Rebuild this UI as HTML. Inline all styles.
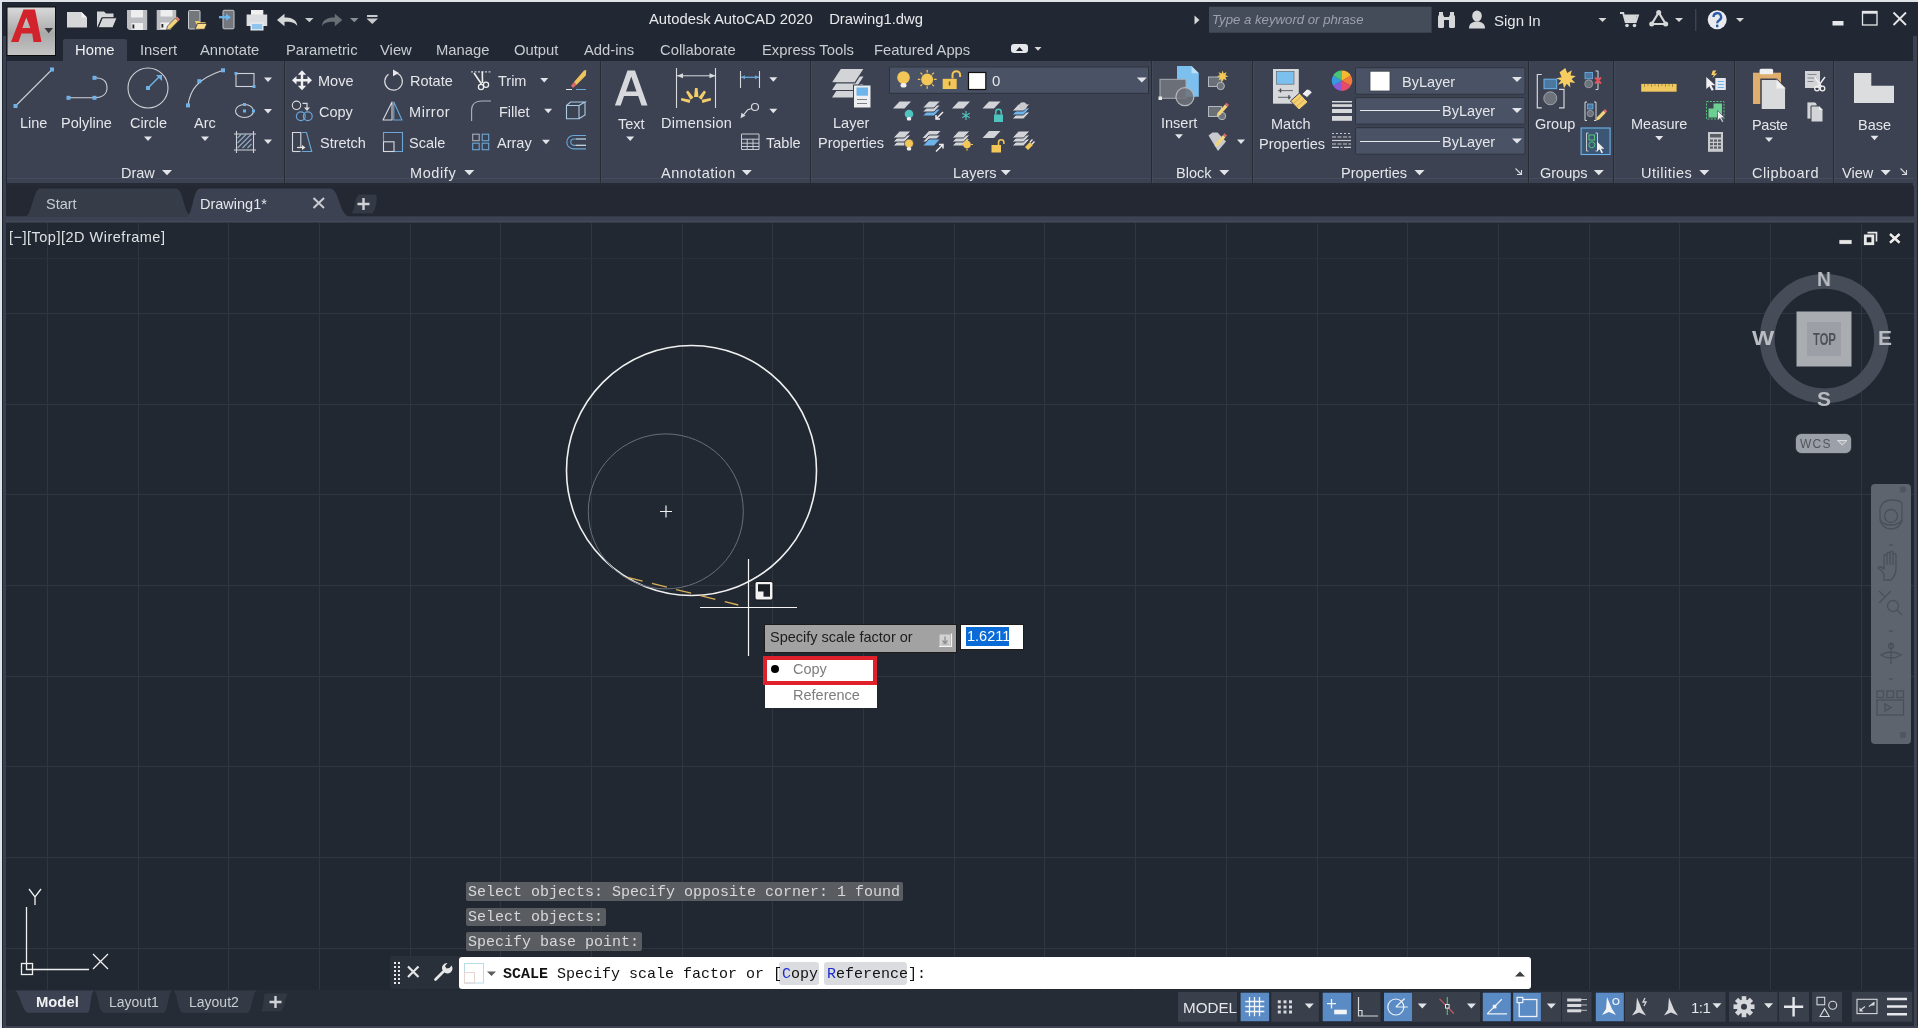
<!DOCTYPE html>
<html><head><meta charset="utf-8">
<style>
*{margin:0;padding:0;box-sizing:border-box}
html,body{width:1918px;height:1028px;overflow:hidden;background:#dfe3e8;font-family:"Liberation Sans",sans-serif}
.a{position:absolute}
.t{position:absolute;white-space:nowrap;line-height:1;font-size:14.5px;color:#e4e6e9;will-change:transform}
.dd{position:absolute;width:0;height:0;border-left:4.5px solid transparent;border-right:4.5px solid transparent;border-top:5px solid #e0e2e6}
svg{position:absolute;overflow:visible}
#frame{left:2px;top:2px;width:1916px;height:1026px;background:#222833}
#ribbon{left:7px;top:61px;width:1906px;height:122px;background:#3d4253}
.sep{position:absolute;top:61px;width:2px;height:122px;background:#262b34;border-right:1px solid #424a58}
#tabbar{left:6px;top:186px;width:1908px;height:36px;background:#232833}
#vp{left:6px;top:222px;width:1908px;height:768px;background:#212832;overflow:hidden}
#laybar{left:6px;top:990px;width:1908px;height:35px;background:#262c36}
.mono{font-family:"Liberation Mono",monospace}
</style></head><body>
<div id="frame" class="a"></div>
<div class="a" style="left:3px;top:36px;width:3px;height:992px;background:#3b4050"></div>
<div class="a" style="left:1914px;top:36px;width:3px;height:992px;background:#3d4350"></div>
<div class="a" style="left:3px;top:1025.5px;width:1915px;height:2.5px;background:#3d4350"></div>
<!-- title bar -->
<svg class="a" style="left:0;top:0" width="1918" height="1028" viewBox="0 0 1918 1028">
<defs>
<linearGradient id="lg" x1="0" y1="0" x2="0" y2="1"><stop offset="0" stop-color="#d9d9d9"/><stop offset="0.55" stop-color="#a9a9a9"/><stop offset="1" stop-color="#c4c4c4"/></linearGradient>
</defs>
<rect x="6.5" y="6.5" width="49.5" height="49.5" fill="#0c0e11"/>
<rect x="7.5" y="7.5" width="47.5" height="47.5" fill="url(#lg)"/>
<path d="M23.5 9.5h11.5l6.5 32.5h-8l-1.3-8.5h-10.7l-3 8.5h-7.5z M26.3 17.5l-4 10.5h8z" fill="#d2232d" fill-rule="evenodd"/>
<path d="M44.5 28h8.5l-4.3 5.3z" fill="#3a3a3a"/>
<!-- new -->
<path d="M67 12h14.5l5.5 5.5V27.5H67z" fill="#d6d7d9"/>
<path d="M81.5 12v5.5h5.5z" fill="#f4f4f4"/>
<!-- open -->
<path d="M97 11.5h7l2 2h7.5v4h-12l-4.5 10.3z" fill="#d6d7d9"/>
<path d="M102.3 17.8h14.8l-4.2 10h-14.8z" fill="#d6d7d9" stroke="#1e232c" stroke-width="1"/>
<!-- save -->
<path d="M127 10h20.2v20H129l-2-2z" fill="#bcbec2"/>
<rect x="131" y="10" width="12" height="7.5" fill="#eeeeee"/>
<rect x="131.5" y="23" width="11.5" height="7" fill="#eeeeee"/>
<rect x="132.5" y="24.5" width="1.8" height="4" fill="#222"/>
<!-- save as -->
<path d="M156.7 10h19.5v12l-6 8h-13.5z" fill="#bcbec2"/>
<rect x="160.5" y="10" width="12" height="6.5" fill="#eeeeee"/>
<rect x="160.5" y="22.5" width="9" height="6.5" fill="#eeeeee"/>
<rect x="161.5" y="24" width="1.8" height="3.5" fill="#222"/>
<path d="M166.5 30l1-4 8-8 3 3-8 8z" fill="#f3d47a" stroke="#1e232c" stroke-width="0.6"/>
<path d="M175.5 18l1.5-1.5 3 3-1.5 1.5z" fill="#e88080"/>
<!-- open from web -->
<rect x="188.5" y="10.5" width="11.5" height="18.5" rx="1" fill="#74777c" stroke="#c8cacd" stroke-width="1"/>
<path d="M195 21h4l1 1.2h5.5v2.5h-9z" fill="#f3cd6a"/>
<path d="M197.5 23.5h9.5l-2.5 5.8h-9.5z" fill="#f7dc8c" stroke="#1e232c" stroke-width="0.7"/>
<!-- save to web -->
<rect x="223" y="10.3" width="11" height="18.5" rx="1" fill="#74777c" stroke="#c8cacd" stroke-width="1"/>
<path d="M219 17.2h8" stroke="#6ab8f0" stroke-width="2.2"/><path d="M226 13.7l5 3.5-5 3.5z" fill="#6ab8f0"/>
<!-- print -->
<rect x="251" y="10" width="12.3" height="6.5" fill="#f0f0f0"/>
<path d="M246.6 14.5h20.6v11.5h-20.6z" fill="#dcdde0"/>
<rect x="250.5" y="22.5" width="13" height="8" fill="#f0f0f0"/>
<rect x="251.8" y="23.8" width="10.5" height="5.5" fill="#8fc4ee"/>
<!-- undo -->
<path d="M277 20l7.5-6.2v3.8c6 0 12.5 1.5 12.8 8.5-2.3-3.8-7-4.5-12.8-4.2v4.3z" fill="#d6d7d9"/>
<path d="M305 18h8.5l-4.2 4.3z" fill="#c8cacd"/>
<!-- redo -->
<path d="M342.3 20l-7.5-6.2v3.8c-6 0-12.5 1.5-12.8 8.5 2.3-3.8 7-4.5 12.8-4.2v4.3z" fill="#6a6f76"/>
<path d="M350 18h8.5l-4.2 4.3z" fill="#8a8f96"/>
<rect x="367" y="15" width="10.5" height="2" fill="#c8cacd"/>
<path d="M366.5 18.5h11.5l-5.75 5.5z" fill="#c8cacd"/>
<!-- search -->
<path d="M1194.5 15.5l5 4.5-5 4.5z" fill="#d6d7d9"/>
<rect x="1209" y="6.7" width="222.6" height="26" fill="#454c59"/>
<!-- binoculars -->
<g fill="#d6d7d9"><rect x="1438" y="15" width="6" height="13" rx="1.5"/><rect x="1449" y="15" width="6" height="13" rx="1.5"/><rect x="1443" y="17" width="7" height="3"/><rect x="1439" y="12" width="4" height="4"/><rect x="1450" y="12" width="4" height="4"/></g>
<!-- person -->
<ellipse cx="1477" cy="16" rx="4.8" ry="5.5" fill="#d6d7d9"/>
<path d="M1469 28.5c0-5 3.5-7 8-7s8 2 8 7z" fill="#d6d7d9"/>
<path d="M1598.5 18h8l-4 4z" fill="#d6d7d9"/>
<!-- cart -->
<path d="M1620 13h3.2l2.5 9h10l2.2-6.5h-13" stroke="#d6d7d9" stroke-width="2" fill="none"/>
<rect x="1625" y="16" width="11" height="5" fill="#d6d7d9"/>
<circle cx="1627" cy="25.5" r="1.8" fill="#d6d7d9"/><circle cx="1634.5" cy="25.5" r="1.8" fill="#d6d7d9"/>
<!-- a360 -->
<path d="M1658.7 12.5l-7 11.5h14z" stroke="#d6d7d9" stroke-width="2.2" fill="none" stroke-linejoin="round"/>
<circle cx="1658.7" cy="12.5" r="2.5" fill="#d6d7d9"/><circle cx="1651.7" cy="24" r="2.5" fill="#d6d7d9"/><circle cx="1665.7" cy="24" r="2.5" fill="#d6d7d9"/>
<path d="M1675 18h8l-4 4z" fill="#d6d7d9"/>
<rect x="1695.3" y="9" width="1" height="22" fill="#4a505a"/>
<!-- help -->
<circle cx="1717.2" cy="19.8" r="9.5" fill="#e8eaee"/>
<path d="M1713.5 17a3.8 3.8 0 1 1 5.5 3.4c-1.3 0.7-1.8 1.3-1.8 2.8" stroke="#2a5aa8" stroke-width="2.3" fill="none"/>
<circle cx="1717.2" cy="26" r="1.4" fill="#2a5aa8"/>
<path d="M1736 18h8l-4 4z" fill="#d6d7d9"/>
<!-- window controls -->
<rect x="1832.5" y="21" width="11" height="4.5" fill="#e6e7ea"/>
<rect x="1862.5" y="11.5" width="14.5" height="13.5" fill="none" stroke="#e6e7ea" stroke-width="1.3"/>
<rect x="1862.5" y="11.5" width="14.5" height="2.2" fill="#e6e7ea"/>
<path d="M1893.5 12.5l12.5 12.5M1906 12.5l-12.5 12.5" stroke="#e6e7ea" stroke-width="1.8"/>
<!-- featured apps toggle -->
<rect x="1011" y="44" width="17" height="9" rx="3" fill="#e6e7ea"/>
<path d="M1016 51h7l-3.5-4z" fill="#1e232c"/>
<path d="M1034.5 47h7l-3.5 3.8z" fill="#d6d7d9"/>
</svg>
<div class="t" style="left:1212px;top:13px;font-size:13.2px;font-style:italic;color:#9ba2ad">Type a keyword or phrase</div>
<div class="t" style="left:1494px;top:13px;font-size:15px;color:#e4e6e9">Sign In</div>

<div class="t" style="left:649px;top:12px;font-size:14.8px;color:#e8e9eb">Autodesk AutoCAD 2020&nbsp;&nbsp;&nbsp; Drawing1.dwg</div>
<!-- ribbon tabs -->
<div class="a" style="left:63px;top:39px;width:64px;height:22px;background:#3d4253;border-radius:2px 2px 0 0"></div>
<div class="t" style="left:74.5px;top:42.5px;font-size:14.8px;color:#f0f1f3">Home</div>
<div class="t" style="left:140px;top:42.5px;color:#c9ccd1;font-size:14.8px">Insert</div>
<div class="t" style="left:200px;top:42.5px;color:#c9ccd1;font-size:14.8px">Annotate</div>
<div class="t" style="left:286px;top:42.5px;color:#c9ccd1;font-size:14.8px">Parametric</div>
<div class="t" style="left:380px;top:42.5px;color:#c9ccd1;font-size:14.8px">View</div>
<div class="t" style="left:436px;top:42.5px;color:#c9ccd1;font-size:14.8px">Manage</div>
<div class="t" style="left:514px;top:42.5px;color:#c9ccd1;font-size:14.8px">Output</div>
<div class="t" style="left:584px;top:42.5px;color:#c9ccd1;font-size:14.8px">Add-ins</div>
<div class="t" style="left:660px;top:42.5px;color:#c9ccd1;font-size:14.8px">Collaborate</div>
<div class="t" style="left:762px;top:42.5px;color:#c9ccd1;font-size:14.8px">Express Tools</div>
<div class="t" style="left:874px;top:42.5px;color:#c9ccd1;font-size:14.8px">Featured Apps</div>

<div id="ribbon" class="a"></div>
<div class="a" style="left:7px;top:178px;width:1906px;height:1px;background:#454c5c"></div>
<div class="a" style="left:7px;top:183px;width:1906px;height:3px;background:#252a34"></div>
<div class="sep" style="left:284px"></div>
<div class="sep" style="left:600px"></div>
<div class="sep" style="left:810px"></div>
<div class="sep" style="left:1151px"></div>
<div class="sep" style="left:1252px"></div>
<div class="sep" style="left:1528px"></div>
<div class="sep" style="left:1613px"></div>
<div class="sep" style="left:1734px"></div>
<div class="sep" style="left:1833px"></div>
<div class="a" style="left:1913px;top:36px;width:4px;height:152px;background:#3c4350"></div>

<svg class="a" style="left:0;top:0" width="1918" height="1028" viewBox="0 0 1918 1028">
<defs>
</defs>
<!-- ===== DRAW ===== -->
<g stroke="#cfd2d6" stroke-width="1.1" fill="none">
<line x1="15.5" y1="106" x2="52" y2="69.5"/>
<path d="M68.5 97.8H94.5M94.5 77.8C103 77.8 107 82 107 87.8C107 93.5 103 97.8 94.5 97.8"/>
<circle cx="148" cy="88" r="20"/>
<path d="M188 105.4C190 90 197 79 223 70.3"/>
<rect x="236" y="73.5" width="18" height="13"/>
<ellipse cx="244.5" cy="111" rx="9" ry="6.5"/>
<path d="M236.5 131v22M253.5 131v22M234 134h22M234 150h22"/>
</g>
<path d="M148 88L159 77" stroke="#6fb1e6" stroke-width="1.5"/>
<path d="M156 75h6v6z" fill="#6fb1e6"/>
<path d="M237.5 148l14-14M237.5 143l9-9M237.5 138l4-4M242.5 148l9-9M247.5 148l4-4" stroke="#8fa9c0" stroke-width="1.2"/>
<g fill="#6fb1e6">
<rect x="13.5" y="104" width="4" height="4"/><rect x="50" y="67.5" width="4" height="4"/>
<rect x="66.5" y="95.8" width="4" height="4"/><rect x="92.5" y="95.8" width="4" height="4"/><rect x="92.5" y="75.8" width="4" height="4"/>
<rect x="146" y="86" width="4" height="4"/>
<rect x="186" y="103.4" width="4" height="4"/><rect x="197.3" y="79.2" width="4" height="4"/><rect x="221" y="68.3" width="4" height="4"/>
<rect x="234.5" y="72" width="3" height="3"/><rect x="252.5" y="85" width="3" height="3"/>
<rect x="243" y="109.5" width="3" height="3"/><rect x="243" y="103" width="3" height="3"/><rect x="252" y="109.5" width="3" height="3"/>
</g>
<g transform="translate(268,79.5)"><path d="M-4 -2h8l-4 4.5z" fill="#e2e4e8"/></g><g transform="translate(268,111)"><path d="M-4 -2h8l-4 4.5z" fill="#e2e4e8"/></g><g transform="translate(268,141.6)"><path d="M-4 -2h8l-4 4.5z" fill="#e2e4e8"/></g>
<g transform="translate(148,138.6)"><path d="M-4 -2h8l-4 4.5z" fill="#e2e4e8"/></g><g transform="translate(205,138.6)"><path d="M-4 -2h8l-4 4.5z" fill="#e2e4e8"/></g><g transform="translate(167,172.6)"><path d="M-5 -2.6h10l-5 5.2z" fill="#e2e4e8"/></g>
<!-- ===== MODIFY ===== -->
<!-- move -->
<path d="M302 70.3l-4.2 4.5h3v4.3h-4.3v-3l-4.5 4.2 4.5 4.2v-3h4.3v4.3h-3l4.2 4.5 4.2-4.5h-3v-4.3h4.3v3l4.5-4.2-4.5-4.2v3h-4.3v-4.3h3z" fill="#f0f0f0"/>
<!-- copy -->
<circle cx="296.5" cy="105.3" r="4.2" stroke="#d8dadd" stroke-width="1.1" fill="none"/>
<path d="M302.5 103.3h4.5v5" stroke="#d8dadd" stroke-width="1.2" fill="none"/>
<path d="M304 107.5h6l-3 3.5z" fill="#d8dadd"/>
<circle cx="300.8" cy="116.3" r="4.4" stroke="#6aa7d8" stroke-width="1.2" fill="none"/>
<circle cx="307.8" cy="116.3" r="4.4" stroke="#6aa7d8" stroke-width="1.2" fill="none"/>
<!-- stretch -->
<path d="M292.5 151.5V132.5h8.3V148" stroke="#d8dadd" stroke-width="1.1" fill="none"/>
<path d="M292.5 151.5h8" stroke="#d8dadd" stroke-width="1.1"/>
<path d="M297 147.5h5" stroke="#e8e8e8" stroke-width="1.2"/><path d="M302 145l3.5 2.5-3.5 2.5z" fill="#e8e8e8"/>
<path d="M302 132.5h4.5l5.2 19h-10" stroke="#6aa7d8" stroke-width="1.1" fill="none"/>
<!-- rotate -->
<path d="M397 73.3A8.8 8.8 0 1 1 388.5 74.2" stroke="#d8dadd" stroke-width="1.2" fill="none"/>
<path d="M393 69.5l6 3.5-6 3.2z" fill="#e8e8e8"/>
<!-- mirror -->
<path d="M392 102v18h-9z" stroke="#d8dadd" stroke-width="1.1" fill="none" stroke-linejoin="round"/>
<path d="M393.8 102v18h8.2z" stroke="#6aa7d8" stroke-width="1.1" fill="none" stroke-linejoin="round"/>
<!-- scale -->
<path d="M383.5 141.5V132.5h19v19h-8.5" stroke="#6aa7d8" stroke-width="1.1" fill="none"/>
<rect x="383.5" y="141.8" width="10.5" height="9.7" stroke="#d8dadd" stroke-width="1.1" fill="none"/>
<!-- trim -->
<path d="M471 71.8h20" stroke="#c0c4ca" stroke-width="1.2" stroke-dasharray="2,1.5"/>
<path d="M474 73l7.5 11M482.3 71.5l0.2 11.5" stroke="#eeeeee" stroke-width="1.6"/>
<circle cx="481" cy="87" r="2.6" stroke="#eeeeee" stroke-width="1.3" fill="none"/>
<circle cx="486" cy="84.7" r="2.6" stroke="#eeeeee" stroke-width="1.3" fill="none"/>
<g transform="translate(544.2,80)"><path d="M-4 -2h8l-4 4.5z" fill="#e2e4e8"/></g>
<!-- erase -->
<path d="M574 82l10-11.5 2.3-0.5-0.5 5.5-9.5 9.5z" fill="#efc45c"/>
<path d="M571 85.5l3-3.5 2.3 3-3.3 3z" fill="#e06a6a"/>
<path d="M566 89.5h6" stroke="#e6e6e6" stroke-width="1"/><path d="M576 89.5h10" stroke="#6aa7d8" stroke-width="1"/>
<!-- fillet -->
<path d="M471.6 121V110C471.6 104 476 101 482 101H491" stroke="#a9b6c4" stroke-width="1.1" fill="none"/>
<g transform="translate(548.2,110.8)"><path d="M-4 -2h8l-4 4.5z" fill="#e2e4e8"/></g>
<!-- explode cube -->
<path d="M566.5 105.5h12.5v13.3h-12.5z M566.5 105.5l4-3.5h14.5l-6 3.5 M585 102v13l-6 3.8" stroke="#a9cbe4" stroke-width="1.1" fill="none"/>
<!-- array -->
<g stroke-width="1.1" fill="none">
<rect x="472.7" y="134.2" width="6.5" height="6.5" stroke="#a9b0b8"/>
<rect x="482.2" y="134.2" width="6.5" height="6.5" stroke="#6aa7d8"/>
<rect x="472.7" y="143.2" width="6.5" height="6.5" stroke="#6aa7d8"/>
<rect x="482.2" y="143.2" width="6.5" height="6.5" stroke="#6aa7d8"/>
</g>
<g transform="translate(546,141.8)"><path d="M-4 -2h8l-4 4.5z" fill="#e2e4e8"/></g>
<!-- offset -->
<path d="M586 135.5h-12.5a6.7 6.7 0 0 0 0 13.4H586 M586 139h-12a3.2 3.2 0 0 0 0 6.4H586" stroke="#6aa7d8" stroke-width="1.1" fill="none"/>
<path d="M576 139h10M576 145.4h10" stroke="#c8ccd2" stroke-width="1.1"/>
<g transform="translate(469.3,172.6)"><path d="M-5 -2.6h10l-5 5.2z" fill="#e2e4e8"/></g>
<!-- ===== ANNOTATION ===== -->
<g transform="translate(630.2,138.4)"><path d="M-4 -2h8l-4 4.5z" fill="#e2e4e8"/></g><g transform="translate(773.3,79.2)"><path d="M-4 -2h8l-4 4.5z" fill="#e2e4e8"/></g><g transform="translate(773.3,110.8)"><path d="M-4 -2h8l-4 4.5z" fill="#e2e4e8"/></g><g transform="translate(746.8,172.6)"><path d="M-5 -2.6h10l-5 5.2z" fill="#e2e4e8"/></g>
<path d="M676.5 68v40M715.5 68v40" stroke="#d8dadd" stroke-width="1.1"/>
<path d="M677 75.8h38.5" stroke="#d8dadd" stroke-width="1"/>
<path d="M677 75.8l6-2.5v5z M715.5 75.8l-6-2.5v5z" fill="#d8dadd"/>
<g fill="#f3cd6a">
<path d="M695 88l2.5 0 1 9h-4.5z"/>
<path d="M686 92l2-1.5 5.5 7-3 2.2z"/>
<path d="M706 92l-2-1.5-5.5 7 3 2.2z"/>
<path d="M681 100.5l0.2-2.5 9 1.8-0.5 3.2z"/>
<path d="M711 100.5l-0.2-2.5-9 1.8 0.5 3.2z"/>
</g>
<!-- small linear dim -->
<path d="M740.5 71v17M759.5 71v17" stroke="#d8dadd" stroke-width="1.1"/>
<path d="M741 77.3h18" stroke="#6aa7d8" stroke-width="1.3"/>
<path d="M741 77.3l4-2v4z M759 77.3l-4-2v4z" fill="#6aa7d8"/>
<!-- leader -->
<circle cx="755" cy="107" r="3.5" stroke="#d8dadd" stroke-width="1.2" fill="none"/>
<path d="M751.8 108.5l-4 1.2-4.5 5.5" stroke="#d8dadd" stroke-width="1.2" fill="none"/>
<path d="M740.5 118.2l1-5.5 4 3z" fill="#d8dadd"/>
<!-- table -->
<path d="M741.5 134h17.5v15.5h-17.5z M741.5 139.2h17.5 M741.5 143.2h17.5 M741.5 146.5h17.5 M747.2 139v10.5 M753 139v10.5" stroke="#c8ccd2" stroke-width="1" fill="none"/>
</svg>

<svg class="a" style="left:0;top:0" width="1918" height="1028" viewBox="0 0 1918 1028">
<defs>
</defs>
<!-- Text A -->
<path d="M627.5 70.5h7.5l12.5 35h-6l-3.3-9.5h-14.2l-3.3 9.5h-5.8z M631.3 76.5l-5.3 15h10.5z" fill="#d6d8db" fill-rule="evenodd"/>
<!-- ===== LAYERS ===== -->
<g transform="translate(831,68)">
<path d="M9.5 15.5h24l-9.5 14.5h-24z" fill="#d2d4d7" stroke="#3d4253" stroke-width="1.2"/>
<path d="M9.5 8h24l-9.5 14.5h-24z" fill="#d2d4d7" stroke="#3d4253" stroke-width="1.2"/>
<path d="M9.5 0.3h24l-9.5 14.5h-24z" fill="#d2d4d7" stroke="#3d4253" stroke-width="1.2"/>
<rect x="22.5" y="17" width="17.5" height="23" fill="#eceef0" stroke="#3d4253" stroke-width="1"/>
<rect x="25.5" y="19.5" width="11.5" height="8.2" fill="#6db4ea"/>
<path d="M26 31.5h10M26 35.5h10" stroke="#7b8088" stroke-width="1"/>
</g>
<!-- layer dropdown -->
<rect x="889.5" y="67" width="259" height="26.3" fill="#4a5265" stroke="#2e343e" stroke-width="1"/>
<circle cx="903.5" cy="77.5" r="6.3" fill="#f3c658"/>
<rect x="900.5" y="83" width="6" height="4.5" rx="2" fill="#eeeeee"/>
<circle cx="927.2" cy="79.4" r="6" fill="#f3c658"/>
<g stroke="#f3c658" stroke-width="1.2"><path d="M927.2 70v2.5M927.2 86.3v2.5M917.8 79.4h2.5M934.1 79.4h2.5M920.5 72.7l1.8 1.8M932.1 84.3l1.8 1.8M933.9 72.7l-1.8 1.8M922.3 84.3l-1.8 1.8"/></g>
<rect x="942.7" y="78.8" width="14" height="10.2" fill="#f3c658"/>
<path d="M952.5 78.5v-3.5a3.8 3.8 0 0 1 7.6 0v2" stroke="#f3c658" stroke-width="2" fill="none"/>
<rect x="948.8" y="81.5" width="1.5" height="4" fill="#6b5a30"/>
<rect x="968.5" y="72.5" width="17.3" height="17" fill="#ffffff" stroke="#111" stroke-width="1.2"/>
<g transform="translate(1141.8,80)"><path d="M-5 -2.6h10l-5 5.2z" fill="#e2e4e8"/></g>
<!-- small layer icons row2 -->
<g transform="translate(893,101.5)"><g><path d="M6.5 0h11.5l-6.5 7h-11.5z" fill="#d2d4d7"/></g><circle cx="16" cy="12.5" r="4.3" fill="#4fc3bd"/><rect x="13.8" y="15.5" width="4.4" height="3.5" rx="1.5" fill="#eee"/></g>
<g transform="translate(922.5,101)"><path d="M6.5 8h11.5l-6.5 7h-11.5z" fill="#6db4ea" stroke="#3d4253" stroke-width="1"/><g transform="translate(0,4)" stroke="#3d4253" stroke-width="1"><path d="M6.5 0h11.5l-6.5 7h-11.5z" fill="#d2d4d7"/></g><g transform="translate(0,0)" stroke="#3d4253" stroke-width="1"><path d="M6.5 0h11.5l-6.5 7h-11.5z" fill="#d2d4d7"/></g><path d="M20.5 11l-7 7M13.5 14v4h4" stroke="#eee" stroke-width="1.5" fill="none"/></g>
<g transform="translate(952,101.5)"><g><path d="M6.5 0h11.5l-6.5 7h-11.5z" fill="#d2d4d7"/></g><g stroke="#4fc3bd" stroke-width="1.2"><path d="M14 9.5v9M10.2 11.7l7.6 4.6M17.8 11.7l-7.6 4.6"/></g></g>
<g transform="translate(982.5,101.5)"><g><path d="M6.5 0h11.5l-6.5 7h-11.5z" fill="#d2d4d7"/></g><rect x="11.5" y="13" width="9" height="7.5" fill="#4fc3bd"/><path d="M13.3 13v-2.5a2.7 2.7 0 0 1 5.4 0V13" stroke="#4fc3bd" stroke-width="1.5" fill="none"/></g>
<g transform="translate(1012,104)"><g><g transform="translate(0,8)" stroke="#3d4253" stroke-width="1"><path d="M6.5 0h11.5l-6.5 7h-11.5z" fill="#d2d4d7"/></g><path d="M6.5 4h11.5l-6.5 7h-11.5z" fill="#6db4ea" stroke="#3d4253" stroke-width="1"/><g transform="translate(0,0)" stroke="#3d4253" stroke-width="1"><path d="M6.5 0h11.5l-6.5 7h-11.5z" fill="#d2d4d7"/></g></g><circle cx="11" cy="2" r="3.8" fill="#c8cacd"/></g>
<!-- row3 -->
<g transform="translate(893,131)"><g><g transform="translate(0,8)" stroke="#3d4253" stroke-width="1"><path d="M6.5 0h11.5l-6.5 7h-11.5z" fill="#d2d4d7"/></g><g transform="translate(0,4)" stroke="#3d4253" stroke-width="1"><path d="M6.5 0h11.5l-6.5 7h-11.5z" fill="#d2d4d7"/></g><g transform="translate(0,0)" stroke="#3d4253" stroke-width="1"><path d="M6.5 0h11.5l-6.5 7h-11.5z" fill="#d2d4d7"/></g></g><circle cx="16" cy="12.5" r="4.5" fill="#f3c658" stroke="#3d4253" stroke-width="0.8"/><rect x="13.8" y="16" width="4.4" height="3.5" rx="1.5" fill="#eee"/></g>
<g transform="translate(922.5,131)"><g><g transform="translate(0,0)" ><path d="M6.5 0h11.5l-6.5 7h-11.5z" fill="#d2d4d7"/></g><g transform="translate(0,4)" stroke="#3d4253"><path d="M6.5 0h11.5l-6.5 7h-11.5z" fill="#d2d4d7"/></g><path d="M6.5 8h11.5l-6.5 7h-11.5z" fill="#6db4ea" stroke="#3d4253" stroke-width="1"/></g><path d="M13.5 20.5l7-7M16.5 13.5h4v4" stroke="#eee" stroke-width="1.5" fill="none"/></g>
<g transform="translate(952,131)"><g><g transform="translate(0,8)" stroke="#3d4253" stroke-width="1"><path d="M6.5 0h11.5l-6.5 7h-11.5z" fill="#d2d4d7"/></g><g transform="translate(0,4)" stroke="#3d4253" stroke-width="1"><path d="M6.5 0h11.5l-6.5 7h-11.5z" fill="#d2d4d7"/></g><g transform="translate(0,0)" stroke="#3d4253" stroke-width="1"><path d="M6.5 0h11.5l-6.5 7h-11.5z" fill="#d2d4d7"/></g></g><circle cx="15" cy="13.5" r="3.8" fill="#f3c658"/><g stroke="#f3c658" stroke-width="1.2"><path d="M15 7.5v2M15 17.5v2M9 13.5h2M19 13.5h2"/></g></g>
<g transform="translate(982.5,131)"><g><path d="M6.5 0h11.5l-6.5 7h-11.5z" fill="#d2d4d7"/></g><rect x="9" y="14" width="9.5" height="7.5" fill="#f3c658"/><path d="M16 14v-2.5a2.7 2.7 0 0 1 5.4 0v1.5" stroke="#f3c658" stroke-width="1.5" fill="none"/></g>
<g transform="translate(1012,131)"><g><g transform="translate(0,8)" stroke="#3d4253" stroke-width="1"><path d="M6.5 0h11.5l-6.5 7h-11.5z" fill="#d2d4d7"/></g><g transform="translate(0,4)" stroke="#3d4253" stroke-width="1"><path d="M6.5 0h11.5l-6.5 7h-11.5z" fill="#d2d4d7"/></g><g transform="translate(0,0)" stroke="#3d4253" stroke-width="1"><path d="M6.5 0h11.5l-6.5 7h-11.5z" fill="#d2d4d7"/></g></g><path d="M13 16l5-5 3 3-5 5z" fill="#f3c658"/><path d="M18 11l2.5-2.5M20 13l2.5-2.5" stroke="#eee" stroke-width="1.3"/></g>
<g transform="translate(1005.8,172.6)"><path d="M-5 -2.6h10l-5 5.2z" fill="#e2e4e8"/></g>
<!-- ===== BLOCK ===== -->
<path d="M1177 66h14.5l7.3 7.3V96.7H1177z" fill="#7cc0f0"/>
<path d="M1191.5 66v7.3h7.3z" fill="#b8def8"/>
<rect x="1160" y="79.3" width="26" height="19" fill="#6b6f77" stroke="#a8acb2" stroke-width="1"/>
<circle cx="1184.9" cy="96.7" r="9" fill="#6e727a" fill-opacity="0.85" stroke="#b4b8bd" stroke-width="1.2"/>
<rect x="1158.5" y="96.5" width="3.5" height="3.5" fill="#e8e8e8"/>
<g transform="translate(1179,136.2)"><path d="M-4 -2h8l-4 4.5z" fill="#e2e4e8"/></g>
<g transform="translate(1208,70)"><rect x="0.5" y="7" width="13" height="9.5" fill="#6b6f77" stroke="#b4b8bd" stroke-width="1"/><circle cx="12.7" cy="16" r="3.7" fill="#6e727a" stroke="#b4b8bd" stroke-width="1"/><path d="M14.6 0.5l1 3 3-1.2-1.2 3 3 1-3 1 1.2 3-3-1.2-1 3-1-3-3 1.2 1.2-3-3-1 3-1-1.2-3 3 1.2z" fill="#f3c658"/></g>
<g transform="translate(1208,101)"><rect x="0.5" y="5.5" width="13" height="10" fill="#6b6f77" stroke="#b4b8bd" stroke-width="1"/><circle cx="14" cy="15" r="3.7" fill="#6e727a" stroke="#b4b8bd" stroke-width="1"/><path d="M9.5 12l7.5-8.5 2.5 2.2-7.5 8.5-3.3 1z" fill="#f3d47a"/><path d="M17 3.5l1.5-1.7 2.5 2.2-1.5 1.7z" fill="#e06a6a"/></g>
<g transform="translate(1208,132)"><path d="M0.5 3.5l4-3h5l8.5 9-8 9.5z" fill="#c8cacd"/><path d="M7.5 11.5l7.5-8.5 2.5 2.2-7.5 8.5-3.3 1z" fill="#f3d47a"/><path d="M15 3l1.5-1.7 2.5 2.2-1.5 1.7z" fill="#e06a6a"/></g>
<g transform="translate(1241,141.5)"><path d="M-4 -2h8l-4 4.5z" fill="#e2e4e8"/></g><g transform="translate(1224.3,172.6)"><path d="M-5 -2.6h10l-5 5.2z" fill="#e2e4e8"/></g>
<!-- ===== PROPERTIES ===== -->
<rect x="1273" y="69" width="25.8" height="34.7" fill="#d6d8da"/>
<rect x="1276.3" y="71.4" width="17.7" height="12.8" fill="#7cc0f0" stroke="#5a6068" stroke-width="0.6"/>
<path d="M1278 90.6h15M1278 97.3h13" stroke="#60656c" stroke-width="1"/>
<path d="M1280.5 88.5v4M1289 95.3v4" stroke="#4a4f56" stroke-width="1.5"/>
<path d="M1290.5 101l9-8 8.5 9-9 8z" fill="#f3cf6e" stroke="#3d4253" stroke-width="1"/>
<path d="M1293.5 103.5l8-7M1296.5 106.5l8-7" stroke="#c9a24a" stroke-width="0.8"/>
<path d="M1302 94l5-5 3 1 2 2.5-5 5z" fill="#eeeeee" stroke="#3d4253" stroke-width="0.8"/>
<!-- color wheel -->
<g transform="translate(1342,80.7)">
<path d="M0 0L0-10.2A10.2 10.2 0 0 1 8.8-5.1z" fill="#f7b731"/>
<path d="M0 0L8.8-5.1A10.2 10.2 0 0 1 8.8 5.1z" fill="#f27a3a"/>
<path d="M0 0L8.8 5.1A10.2 10.2 0 0 1 0 10.2z" fill="#e84a6a"/>
<path d="M0 0L0 10.2A10.2 10.2 0 0 1 -8.8 5.1z" fill="#8a5ad8"/>
<path d="M0 0L-8.8 5.1A10.2 10.2 0 0 1 -8.8 -5.1z" fill="#3a9ae0"/>
<path d="M0 0L-8.8 -5.1A10.2 10.2 0 0 1 0 -10.2z" fill="#49c47a"/>
</g>
<g fill="#d6d8da"><rect x="1332" y="101" width="20" height="1.5"/><rect x="1332" y="104.2" width="20" height="2.7"/><rect x="1332" y="109" width="20" height="4"/><rect x="1332" y="116" width="20" height="4.8"/></g>
<g stroke="#c8cacd" stroke-width="1.2"><path d="M1332 133.5h19" stroke-dasharray="2,2"/><path d="M1332 137h19" stroke-dasharray="4,1.5"/><path d="M1332 140.5h19"/><path d="M1332 144h19" stroke-dasharray="4,1.5"/><path d="M1332 147.3h19" stroke-dasharray="7,1.5,2,1.5"/></g>
<g fill="#4a5265" stroke="#2e343e" stroke-width="1">
<rect x="1355.5" y="67.7" width="169.5" height="26.5" rx="1"/>
<rect x="1355.5" y="97.6" width="169.5" height="26.5" rx="1"/>
<rect x="1355.5" y="127.7" width="169.5" height="26.5" rx="1"/>
</g>
<rect x="1370" y="71.2" width="20" height="19.8" fill="#ffffff" stroke="#3a3f47" stroke-width="0.8"/>
<path d="M1360 110.5h80M1360 141.5h80" stroke="#e6e8ea" stroke-width="1.1"/>
<g transform="translate(1517,79.5)"><path d="M-5 -2.6h10l-5 5.2z" fill="#e2e4e8"/></g><g transform="translate(1517,110.5)"><path d="M-5 -2.6h10l-5 5.2z" fill="#e2e4e8"/></g><g transform="translate(1517,141)"><path d="M-5 -2.6h10l-5 5.2z" fill="#e2e4e8"/></g>
<g transform="translate(1419.5,172.6)"><path d="M-5 -2.6h10l-5 5.2z" fill="#e2e4e8"/></g>
<path d="M1515.5 168.5l6 6M1517 174.5h4.5V170" stroke="#d8dadd" stroke-width="1.1" fill="none"/>
<!-- ===== GROUPS ===== -->
<path d="M1541.8 74.5h-4.5v33.3h4.5M1559 89.3h5v18.5h-5" stroke="#d6d8da" stroke-width="1.2" fill="none"/>
<rect x="1544" y="79.2" width="12.7" height="9.5" fill="#4b77a0" stroke="#6db4ea" stroke-width="1"/>
<circle cx="1550.3" cy="98.3" r="6.5" fill="#6e727a" stroke="#a0a4aa" stroke-width="1"/>
<path d="M1565.3 68l1.9 5 4.6-2.8-1.3 5.3 5.3 0.4-4.2 3.1 3.6 3.9-5.3-0.6 0.4 5.3-3.6-3.9-2.7 4.5-1.1-5.2-5.1 1.7 3.3-4.2-4.8-2.3 5.3-1-2-5z" fill="#f7cd62"/>
<g transform="translate(1584.5,70)">
<path d="M11 1h2.5v18.5H11" stroke="#d6d8da" stroke-width="1" fill="none"/>
<rect x="0.5" y="2.5" width="7.5" height="6.3" fill="#4b77a0" stroke="#6db4ea" stroke-width="0.8"/>
<circle cx="4.2" cy="13.8" r="4" fill="#6e727a" stroke="#a0a4aa" stroke-width="0.8"/>
<path d="M10.5 7.5l6 6M16.5 7.5l-6 6" stroke="#e8505a" stroke-width="2"/>
</g>
<g transform="translate(1584.5,101)">
<path d="M2.5 1H0.5v18.5h2M9.5 1h2v18.5h-2" stroke="#d6d8da" stroke-width="1" fill="none"/>
<rect x="3" y="3" width="5.5" height="5" fill="#4b77a0" stroke="#6db4ea" stroke-width="0.8"/>
<circle cx="5.8" cy="12.5" r="3.2" fill="#6e727a" stroke="#a0a4aa" stroke-width="0.8"/>
<path d="M11.5 19.5l1-3.3 6.5-6.7 2.3 2.2-6.5 6.7z" fill="#f3d47a"/><path d="M19 9.5l1.5-1.5 2.3 2.2-1.5 1.5z" fill="#e06a6a"/>
</g>
<rect x="1581.1" y="128" width="29" height="26.5" fill="#3c5675" stroke="#6db4ea" stroke-width="1.1"/>
<g transform="translate(1586,132)">
<path d="M2.5 1H0.5v18h2M9.5 1h2v18h-2" stroke="#c8cacd" stroke-width="1" fill="none"/>
<rect x="3" y="3" width="5.5" height="5" fill="none" stroke="#56c47a" stroke-width="1"/>
<circle cx="5.8" cy="12.8" r="3" fill="none" stroke="#56c47a" stroke-width="1"/>
<path d="M11 9.5v10l2.5-2.2 2 4 1.5-0.8-2-3.8h3.3z" fill="#f0f0f0"/>
</g>
<g transform="translate(1598.8,172.6)"><path d="M-5 -2.6h10l-5 5.2z" fill="#e2e4e8"/></g>
<!-- ===== UTILITIES ===== -->
<rect x="1641.2" y="83.9" width="35.4" height="7.8" fill="#f0c860"/>
<path d="M1644.5 84v3M1648 84v2M1651.5 84v3M1655 84v2M1658.5 84v3M1662 84v2M1665.5 84v3M1669 84v2M1672.5 84v3" stroke="#a08030" stroke-width="0.8"/>
<g transform="translate(1659.2,138)"><path d="M-4 -2h8l-4 4.5z" fill="#e2e4e8"/></g>
<g transform="translate(1705.8,70.5)">
<rect x="9.5" y="7.5" width="10.5" height="12" fill="#e4e8ee"/>
<path d="M12 11h6M12 14h6M12 17h6" stroke="#6db4ea" stroke-width="1.1"/>
<path d="M0.5 6.5v12l3-2.8 2.5 4.5 2-1-2.5-4.5h4z" fill="#f0f0f0"/>
<path d="M7 0l3.5 0-2 3h3l-5 4.5 1.5-3h-2.5z" fill="#f7cd62"/>
</g>
<g transform="translate(1706,101)">
<rect x="0.5" y="0.5" width="17.5" height="17.5" fill="none" stroke="#56c47a" stroke-width="1" stroke-dasharray="2,1.3"/>
<path d="M2.5 7.5h5v-5h8.5v11.5h-5v2.5H2.5z" fill="#6ccf92"/>
<path d="M11.5 9.5v10l2.5-2.2 2 4 1.5-0.8-2-3.8h3.3z" fill="#f0f0f0" stroke="#3d4253" stroke-width="0.6"/>
</g>
<rect x="1708" y="132" width="15" height="19.8" fill="#c8cacd"/>
<rect x="1710" y="134" width="11" height="3.5" fill="#5a5f66"/>
<g fill="#5a5f66"><rect x="1710" y="139.5" width="3" height="2.2"/><rect x="1714" y="139.5" width="3" height="2.2"/><rect x="1718" y="139.5" width="3" height="2.2"/><rect x="1710" y="143" width="3" height="2.2"/><rect x="1714" y="143" width="3" height="2.2"/><rect x="1718" y="143" width="3" height="2.2"/><rect x="1710" y="146.5" width="3" height="2.2"/><rect x="1714" y="146.5" width="3" height="2.2"/><rect x="1718" y="146.5" width="3" height="2.2"/></g>
<g transform="translate(1704.3,172.6)"><path d="M-5 -2.6h10l-5 5.2z" fill="#e2e4e8"/></g>
<!-- ===== CLIPBOARD ===== -->
<rect x="1753" y="72.7" width="28" height="31.3" fill="#dfae6c"/>
<rect x="1759.6" y="68.7" width="13.5" height="5.5" rx="1.5" fill="#f0f0f0"/>
<path d="M1761 79.2h15.5l9.3 9.3V109.7H1761z" fill="#d9dadc" stroke="#3d4253" stroke-width="1.5"/>
<path d="M1776.5 79.2v9.3h9.3z" fill="#f0f0f0"/>
<g transform="translate(1769,139.5)"><path d="M-4 -2h8l-4 4.5z" fill="#e2e4e8"/></g>
<rect x="1805" y="71" width="15" height="17" fill="#d2d4d7"/>
<path d="M1807.5 74.5h9M1807.5 78h9M1807.5 81.5h6" stroke="#7b8088" stroke-width="0.9"/>
<path d="M1814.5 77l7 9.5M1825 77l-7 9.5" stroke="#f0f0f0" stroke-width="1.4"/>
<circle cx="1817" cy="88.5" r="2.3" fill="none" stroke="#f0f0f0" stroke-width="1.3"/><circle cx="1822.5" cy="88.5" r="2.3" fill="none" stroke="#f0f0f0" stroke-width="1.3"/>
<path d="M1807 102h8l2 2v15h-10z" fill="#d2d4d7" stroke="#3d4253" stroke-width="0.8"/>
<path d="M1811 106h8l4 4v12h-12z" fill="#d2d4d7" stroke="#3d4253" stroke-width="1"/>
<path d="M1819 106v4h4z" fill="#f0f0f0"/>
<!-- ===== VIEW ===== -->
<path d="M1854 73h17.3v12.8H1894V103.1H1854z" fill="#dcdddf"/>
<g transform="translate(1874.5,137.8)"><path d="M-4 -2h8l-4 4.5z" fill="#e2e4e8"/></g><g transform="translate(1885.7,172.6)"><path d="M-5 -2.6h10l-5 5.2z" fill="#e2e4e8"/></g>
<path d="M1900.5 168.5l6 6M1902 174.5h4.5V170" stroke="#d8dadd" stroke-width="1.1" fill="none"/>
</svg>

<!-- draw labels -->
<div class="t" style="left:20.4px;top:115.5px">Line</div>
<div class="t" style="left:61px;top:115.5px">Polyline</div>
<div class="t" style="left:130px;top:116px">Circle</div>
<div class="t" style="left:194px;top:116px">Arc</div>
<div class="t" style="left:121px;top:166px">Draw</div>
<!-- modify -->
<div class="t" style="left:318px;top:74px">Move</div>
<div class="t" style="left:319px;top:105px">Copy</div>
<div class="t" style="left:319.5px;top:135.8px">Stretch</div>
<div class="t" style="left:410px;top:74px">Rotate</div>
<div class="t" style="left:409px;top:105px;letter-spacing:0.55px">Mirror</div>
<div class="t" style="left:409px;top:135.8px">Scale</div>
<div class="t" style="left:497.5px;top:74px">Trim</div>
<div class="t" style="left:498.5px;top:105px">Fillet</div>
<div class="t" style="left:497px;top:135.8px">Array</div>
<div class="t" style="left:410px;top:166px;letter-spacing:0.6px">Modify</div>
<!-- annotation -->
<div class="t" style="left:618px;top:116.5px">Text</div>
<div class="t" style="left:660.5px;top:116px;letter-spacing:0.3px">Dimension</div>
<div class="t" style="left:766px;top:135.5px">Table</div>
<div class="t" style="left:660.5px;top:166px;letter-spacing:0.55px">Annotation</div>
<!-- layers -->
<div class="t" style="left:833px;top:116px">Layer</div>
<div class="t" style="left:817.5px;top:135.5px">Properties</div>
<div class="t" style="left:953px;top:166px">Layers</div>
<!-- block -->
<div class="t" style="left:1161px;top:115.5px">Insert</div>
<div class="t" style="left:1175.5px;top:166px">Block</div>
<!-- properties -->
<div class="t" style="left:1271px;top:117px">Match</div>
<div class="t" style="left:1258.5px;top:136.5px">Properties</div>
<div class="t" style="left:1341px;top:166px">Properties</div>
<div class="t" style="left:992px;top:73px;font-size:15px">0</div>
<div class="t" style="left:1402px;top:74.5px">ByLayer</div>
<div class="t" style="left:1442px;top:104px">ByLayer</div>
<div class="t" style="left:1442px;top:134.5px">ByLayer</div>
<!-- groups -->
<div class="t" style="left:1535px;top:117px">Group</div>
<div class="t" style="left:1540px;top:166px">Groups</div>
<div class="t" style="left:1631px;top:116.5px">Measure</div>
<div class="t" style="left:1641px;top:166px;letter-spacing:0.5px">Utilities</div>
<div class="t" style="left:1752px;top:117.5px;letter-spacing:-0.3px">Paste</div>
<div class="t" style="left:1751.5px;top:166px;letter-spacing:0.55px">Clipboard</div>
<div class="t" style="left:1857.5px;top:117.5px">Base</div>
<div class="t" style="left:1841.5px;top:166px">View</div>

<!-- file tab bar -->
<div id="tabbar" class="a"></div>
<div id="vp" class="a"></div>
<div id="laybar" class="a"></div>
<svg class="a" style="left:0;top:0" width="1918" height="1028" viewBox="0 0 1918 1028">
<g stroke="#30363f" stroke-width="1" fill="none">
<line x1="47.5" y1="222" x2="47.5" y2="990"/>
<line x1="138.5" y1="222" x2="138.5" y2="990"/>
<line x1="228.5" y1="222" x2="228.5" y2="990"/>
<line x1="319.5" y1="222" x2="319.5" y2="990"/>
<line x1="410.5" y1="222" x2="410.5" y2="990"/>
<line x1="500.5" y1="222" x2="500.5" y2="990"/>
<line x1="591.5" y1="222" x2="591.5" y2="990"/>
<line x1="682.5" y1="222" x2="682.5" y2="990"/>
<line x1="772.5" y1="222" x2="772.5" y2="990"/>
<line x1="863.5" y1="222" x2="863.5" y2="990"/>
<line x1="954.5" y1="222" x2="954.5" y2="990"/>
<line x1="1044.5" y1="222" x2="1044.5" y2="990"/>
<line x1="1135.5" y1="222" x2="1135.5" y2="990"/>
<line x1="1226.5" y1="222" x2="1226.5" y2="990"/>
<line x1="1317.5" y1="222" x2="1317.5" y2="990"/>
<line x1="1407.5" y1="222" x2="1407.5" y2="990"/>
<line x1="1498.5" y1="222" x2="1498.5" y2="990"/>
<line x1="1589.5" y1="222" x2="1589.5" y2="990"/>
<line x1="1679.5" y1="222" x2="1679.5" y2="990"/>
<line x1="1770.5" y1="222" x2="1770.5" y2="990"/>
<line x1="1861.5" y1="222" x2="1861.5" y2="990"/>
<line x1="6" y1="222.5" x2="1914" y2="222.5"/>
<line x1="6" y1="313.5" x2="1914" y2="313.5"/>
<line x1="6" y1="404.5" x2="1914" y2="404.5"/>
<line x1="6" y1="494.5" x2="1914" y2="494.5"/>
<line x1="6" y1="585.5" x2="1914" y2="585.5"/>
<line x1="6" y1="676.5" x2="1914" y2="676.5"/>
<line x1="6" y1="766.5" x2="1914" y2="766.5"/>
<line x1="6" y1="857.5" x2="1914" y2="857.5"/>
<line x1="6" y1="948.5" x2="1914" y2="948.5"/>

<line x1="6" y1="258.5" x2="1914" y2="258.5" stroke="#2a303a"/>
</g>
<!-- drawing -->
<circle cx="691.5" cy="470.5" r="125" stroke="#f0f0f0" stroke-width="1.6" fill="none"/>
<circle cx="665.8" cy="511.4" r="77.5" stroke="#6a6f77" stroke-width="1" fill="none"/>
<path d="M660 511.5h12M666 505.5v12" stroke="#f0f0f0" stroke-width="1.2"/>
<line x1="627.7" y1="577.4" x2="738.3" y2="605" stroke="#d9b055" stroke-width="1.3" stroke-dasharray="15.4,9.6"/>
<path d="M748.5 559V656M700 607.5H797" stroke="#f2f2f2" stroke-width="1.2"/>
<rect x="755" y="581.5" width="18" height="18.5" rx="2" fill="#f2f2f2" stroke="#15181d" stroke-width="1"/>
<rect x="758" y="584.2" width="12" height="12.5" fill="#1b1f26"/>
<rect x="756" y="591.5" width="7.5" height="7.5" fill="#f2f2f2"/>
<!-- UCS -->
<path d="M26.5 907V969.5H89" stroke="#f0f0f0" stroke-width="1.3" fill="none"/>
<rect x="21.5" y="963.5" width="11" height="11" stroke="#f0f0f0" stroke-width="1.3" fill="none"/>
<path d="M29 889l6 8 6-8M35 897v8" stroke="#f0f0f0" stroke-width="1.3" fill="none"/>
<path d="M93 954l15 15M108 954l-15 15" stroke="#f0f0f0" stroke-width="1.3" fill="none"/>
</svg>

<svg class="a" style="left:0;top:0" width="1918" height="1028" viewBox="0 0 1918 1028">
<!-- file tabs -->
<rect x="6" y="216.3" width="1908" height="5.7" fill="#3d4253"/>
<path d="M26 216.5C32 214 33 190 40 188.5H176C184 189 183 214 192 216.5z" fill="#363d49"/>
<path d="M186 217C194 214 192 190 200 188.5H330C340 189 338 214 350 217z" fill="#3d4253"/>
<path d="M351 213.5C356 211 354 195 360 194.5H376C378 196 376 211 372 213.5z" fill="#333945"/>
<path d="M357.5 204h12M363.5 198v12" stroke="#d0d2d6" stroke-width="2.4"/>
<path d="M313.5 198l10.5 10M324 198l-10.5 10" stroke="#c9ccd0" stroke-width="2"/>
<rect x="6" y="221" width="1908" height="1.2" fill="#444c59"/>
<!-- layout tabs -->
<path d="M15.5 990.5H94C90 994 91 1011 88 1012.8H28C22 1011 20 994 15.5 990.5z" fill="#3d4253"/>
<path d="M94 990.5H172C168 994 168 1011 164 1012.8H104C98 1011 99 994 94 990.5z" fill="#333a45"/>
<path d="M173.5 990.5H256.5C252 994 252 1011 248 1012.8H183C177 1011 178 994 173.5 990.5z" fill="#333a45"/>
<path d="M265 993.5H288C285 996 285 1010 280 1011.3H261C264 1008 263 996 265 993.5z" fill="#313843"/>
<path d="M269.5 1002h12M275.5 996v12" stroke="#d0d2d6" stroke-width="2.4"/>
</svg>
<div class="t" style="left:46.3px;top:196.7px;color:#c9ccd1">Start</div>
<div class="t" style="left:200.2px;top:196.7px;color:#e4e6e9">Drawing1*</div>
<div class="t" style="left:35.5px;top:994.5px;font-weight:bold;color:#f0f1f3;font-size:14.8px">Model</div>
<div class="t" style="left:108.7px;top:994.5px;color:#c9ccd1;font-size:14px">Layout1</div>
<div class="t" style="left:189.3px;top:994.5px;color:#c9ccd1;font-size:14px">Layout2</div>

<!-- viewport overlays -->
<div class="t" style="left:9px;top:229.5px;font-size:14.5px;color:#dfe1e4;letter-spacing:0.5px">[−][Top][2D Wireframe]</div>
<svg class="a" style="left:0;top:0" width="1918" height="1028" viewBox="0 0 1918 1028">
<!-- viewport controls -->
<rect x="1839" y="239.8" width="13" height="4.4" fill="#e8e8e8" stroke="#15181d" stroke-width="0.6"/>
<path d="M1867.5 232.6h9v9" stroke="#e8e8e8" stroke-width="1.6" fill="none"/>
<rect x="1865.3" y="235.9" width="7.5" height="7.8" stroke="#e8e8e8" stroke-width="2.8" fill="#1a1e25"/>
<path d="M1890 234l9.6 8.8M1899.6 234l-9.6 8.8" stroke="#15181d" stroke-width="4.2"/>
<path d="M1890 234l9.6 8.8M1899.6 234l-9.6 8.8" stroke="#ececec" stroke-width="2.6"/>
<!-- nav cube -->
<circle cx="1824.4" cy="338.6" r="57.2" stroke="#464d58" stroke-width="14.8" fill="none"/>
<rect x="1796.5" y="311.5" width="55" height="55" fill="#a9acb1"/>
<rect x="1807" y="322" width="34" height="34" fill="#9c9fa5"/>
<rect x="1795.5" y="433.5" width="56" height="20" rx="6" fill="#9ca1a9" stroke="#2a2f37" stroke-width="0.8"/>
<path d="M1837.5 440.5h9.5l-4.75 4.5z" fill="#aeb2b8" stroke="#e6e8ea" stroke-width="0.8"/>
</svg>
<div class="t" style="left:1812.7px;top:332.3px;font-size:16px;font-weight:bold;color:#4b4f56;transform:scaleX(0.7);transform-origin:left">TOP</div>
<div class="t" style="left:1817px;top:269.3px;font-size:20.5px;font-weight:bold;color:#b9bcc1;transform:scaleX(0.94);transform-origin:left">N</div>
<div class="t" style="left:1817px;top:389.1px;font-size:20.5px;font-weight:bold;color:#b9bcc1;transform:scaleX(1.02);transform-origin:left">S</div>
<div class="t" style="left:1752px;top:328.4px;font-size:20.5px;font-weight:bold;color:#b9bcc1;transform:scaleX(1.15);transform-origin:left">W</div>
<div class="t" style="left:1878px;top:328.4px;font-size:20.5px;font-weight:bold;color:#b9bcc1;transform:scaleX(1.02);transform-origin:left">E</div>
<div class="t" style="left:1800px;top:437.5px;font-size:12px;color:#50555c;letter-spacing:1.2px">WCS</div>
<!-- nav bar -->
<div class="a" style="left:1870.5px;top:484px;width:40.5px;height:259.5px;background:rgba(100,106,116,0.9);border-radius:4px"></div>
<svg class="a" style="left:0;top:0" width="1918" height="1028" viewBox="0 0 1918 1028">
<g stroke="#4a5058" stroke-width="1.3" fill="none">
<rect x="1900" y="486.5" width="6" height="6" rx="2" fill="#50565f" stroke="none"/>
<path d="M1880 508c2-6 7-8 12-8 4 0 8 1 10 3v18c-2 5-6 8-11 8-6 0-11-5-11-11z"/>
<circle cx="1891" cy="516" r="6.5"/>
<path d="M1880 520c3 4 7 5 11 5s8-1 11-5"/>
<path d="M1889 545h4"/>
<path d="M1884 574c-2-3-4-5-6-6 1-2 4-1 6 1v-13c0-2 3-2 3 0v9-11c0-2 3-2 3 0v11-12c0-2 3-2 3 0v12-10c0-2 3-2 3 0v13c0 6-2 9-5 12h-7z"/>
<path d="M1879 591l6 6M1891 591l-6 6M1879 603l6-6"/>
<circle cx="1893" cy="606" r="5.5"/><path d="M1897 610l5 5"/>
<path d="M1889 631h4"/>
<path d="M1891 642v22M1881 655c3-2 6-3 10-3s7 1 10 3c-3 2-6 3-10 3s-7-1-10-3z"/><circle cx="1891" cy="646" r="2.5"/>
<path d="M1889 679h4"/>
<rect x="1877" y="691" width="6.5" height="6.5"/><rect x="1887" y="691" width="6.5" height="6.5"/><rect x="1897" y="691" width="6.5" height="6.5"/>
<rect x="1877" y="700" width="26.5" height="15"/><path d="M1885 704v7l6-3.5z"/>
<rect x="1900" y="732" width="6" height="6" rx="2" fill="#50565f" stroke="none"/>
</g>
</svg>
<svg class="a" style="left:0;top:0" width="1918" height="1028" viewBox="0 0 1918 1028">
<g fill="#393f4b">
<rect x="1178" y="992" width="59" height="29.8"/>
<rect x="1271.3" y="992" width="47.6" height="29.8"/>
<rect x="1352.9" y="992" width="27.5" height="29.8"/>
<rect x="1412" y="992" width="68" height="29.8"/>
<rect x="1541" y="992" width="20" height="29.8"/>
<rect x="1562" y="992" width="29.6" height="29.8"/>
<rect x="1625" y="992" width="100.6" height="29.8"/>
<rect x="1729" y="992" width="48.5" height="29.8"/>
<rect x="1779" y="992" width="30" height="29.8"/>
<rect x="1812" y="992" width="30" height="29.8"/>
<rect x="1851.8" y="992" width="60.2" height="29.8"/>
</g>
<g fill="#5b8bc5">
<rect x="1240.6" y="992.7" width="28.5" height="28.5"/>
<rect x="1322.7" y="992.7" width="28.5" height="28.5"/>
<rect x="1384" y="992.7" width="28" height="28.5"/>
<rect x="1482.8" y="992.7" width="28" height="28.5"/>
<rect x="1513.2" y="992.7" width="27.7" height="28.5"/>
<rect x="1595.8" y="992.7" width="28" height="28.5"/>
</g>
<!-- grid -->
<path d="M1249.5 997v19.3M1254.5 997v19.3M1259.5 997v19.3M1245.3 1001.5h19M1245.3 1006.5h19M1245.3 1011.5h19" stroke="#f2f4f7" stroke-width="1.3"/>
<!-- snap dots -->
<g fill="#d6d8db"><rect x="1277.8" y="1000.3" width="3" height="3"/><rect x="1283.5" y="1000.3" width="3" height="3"/><rect x="1289" y="1000.3" width="3" height="3"/><rect x="1277.8" y="1005.5" width="3" height="3"/><rect x="1283.5" y="1005.5" width="3" height="3"/><rect x="1289" y="1005.5" width="3" height="3"/><rect x="1277.8" y="1010.5" width="3" height="3"/><rect x="1283.5" y="1010.5" width="3" height="3"/><rect x="1289" y="1010.5" width="3" height="3"/></g>
<g transform="translate(1309.3,1005.9)"><path d="M-4.5 -2.3h9l-4.5 5z" fill="#e2e4e8"/></g>
<!-- infer -->
<path d="M1327 1003.7h9M1331.5 999v9.5" stroke="#f2f4f7" stroke-width="1.3"/>
<rect x="1334.2" y="1009.7" width="12.6" height="4.6" fill="#f2f4f7"/>
<!-- ortho -->
<path d="M1358.5 997v19h19.5M1358.5 1010.5h3.5v6" stroke="#d6d8db" stroke-width="1.2" fill="none"/>
<!-- polar -->
<circle cx="1395.8" cy="1007" r="8" stroke="#eef1f5" stroke-width="1.2" fill="none"/>
<path d="M1395.8 1007h12M1395.8 1007l8.8-8.5" stroke="#eef1f5" stroke-width="1.2"/>
<g transform="translate(1422.3,1005.9)"><path d="M-4.5 -2.3h9l-4.5 5z" fill="#e2e4e8"/></g>
<!-- iso -->
<path d="M1447.3 997v18" stroke="#5fc46a" stroke-width="1.1"/>
<path d="M1439.6 998.8l14.2 14.7" stroke="#d05868" stroke-width="1.1"/>
<rect x="1445.5" y="1004.5" width="3.6" height="3.6" fill="#363d49" stroke="#e8e8e8" stroke-width="1"/>
<g transform="translate(1471.4,1005.9)"><path d="M-4.5 -2.3h9l-4.5 5z" fill="#e2e4e8"/></g>
<!-- otrack -->
<path d="M1487.2 1013.9h19.8M1487.2 1013.9l14.6-14.6" stroke="#eef1f5" stroke-width="1.3"/>
<rect x="1492.8" y="1004.8" width="3.6" height="3.6" fill="#eef1f5"/>
<!-- osnap -->
<rect x="1519.2" y="999.5" width="17.6" height="17" fill="none" stroke="#eef1f5" stroke-width="1.3"/>
<rect x="1517.1" y="997.4" width="5.7" height="5.2" fill="#5b8bc5" stroke="#eef1f5" stroke-width="1.2"/>
<g transform="translate(1551.3,1005.9)"><path d="M-4.5 -2.3h9l-4.5 5z" fill="#e2e4e8"/></g>
<!-- lineweight -->
<g fill="#d6d8db"><rect x="1567.2" y="998.5" width="14" height="3"/><rect x="1567.2" y="1004" width="14" height="3"/><rect x="1567.2" y="1009.3" width="14" height="3"/></g>
<path d="M1581 999.5h6M1581 1005h6M1581 1010.3h6" stroke="#d6d8db" stroke-width="0.8"/>
<!-- anno monitor -->
<path d="M1607 997l5 12 4 6-7-3-7 3 4-6z" fill="#f2f4f7"/>
<circle cx="1615.9" cy="1001.5" r="3" fill="none" stroke="#f2f4f7" stroke-width="1.2"/>
<path d="M1637 997.5l5 12 4 6-7-3-7 3 4-6z" fill="#d6d8db"/>
<path d="M1645 998l-2 4h3l-2 4" stroke="#d6d8db" stroke-width="1.3" fill="none"/>
<path d="M1669 997.5l5 12 4 6-7-3-7 3 4-6z" fill="#d6d8db"/>
<g transform="translate(1717,1005.5)"><path d="M-4.5 -2.3h9l-4.5 5z" fill="#e2e4e8"/></g>
<!-- gear -->
<g transform="translate(1744,1006.7)" fill="#d6d8db">
<circle r="7.2"/>
<g><rect x="-2.3" y="-10.5" width="4.6" height="5"/><rect x="-2.3" y="5.5" width="4.6" height="5"/><rect x="-10.5" y="-2.3" width="5" height="4.6"/><rect x="5.5" y="-2.3" width="5" height="4.6"/></g>
<g transform="rotate(45)"><rect x="-2.3" y="-10.5" width="4.6" height="5"/><rect x="-2.3" y="5.5" width="4.6" height="5"/><rect x="-10.5" y="-2.3" width="5" height="4.6"/><rect x="5.5" y="-2.3" width="5" height="4.6"/></g>
<circle r="3" fill="#363d49"/>
</g>
<g transform="translate(1768.6,1005.5)"><path d="M-4.5 -2.3h9l-4.5 5z" fill="#e2e4e8"/></g>
<!-- plus -->
<path d="M1784 1006.7h19.2M1793.6 997v19.4" stroke="#e6e8eb" stroke-width="2.4"/>
<!-- isolate -->
<rect x="1817" y="997.3" width="7.7" height="7.5" fill="none" stroke="#d6d8db" stroke-width="1.1"/>
<circle cx="1832.7" cy="1005.2" r="4" fill="none" stroke="#d6d8db" stroke-width="1.1"/>
<path d="M1824.6 1008.6l-4.6 7.9h9.2z" fill="none" stroke="#d6d8db" stroke-width="1.1"/>
<!-- fullscreen -->
<rect x="1857" y="999.3" width="20" height="14.3" fill="none" stroke="#d6d8db" stroke-width="1.1"/>
<path d="M1860 1010.5l5-4M1874 1002.5l-5 4" stroke="#d6d8db" stroke-width="1.1"/>
<path d="M1859.5 1007.5v4h4zM1874.5 1001.5v4h-4z" fill="#d6d8db"/>
<path d="M1887 999h20M1887 1006.5h20M1887 1014.2h20" stroke="#e6e8eb" stroke-width="2.4"/>
</svg>
<div class="t" style="left:1182.8px;top:1000.2px;font-size:15.2px;color:#e6e8eb">MODEL</div>
<div class="t" style="left:1690.5px;top:999.5px;font-size:15px;color:#e6e8eb;letter-spacing:-0.5px">1:1</div>

<!-- command history -->
<div class="a" style="left:466px;top:882px;width:437px;height:18.5px;background:#595d62;border-radius:2px"></div>
<div class="a" style="left:466px;top:907.5px;width:140px;height:18.5px;background:#595d62;border-radius:2px"></div>
<div class="a" style="left:466px;top:932.3px;width:176px;height:18.5px;background:#595d62;border-radius:2px"></div>
<div class="t mono" style="left:468px;top:885px;font-size:15px;color:#d6d7d9">Select objects: Specify opposite corner: 1 found</div>
<div class="t mono" style="left:468px;top:910.3px;font-size:15px;color:#d6d7d9">Select objects:</div>
<div class="t mono" style="left:468px;top:935.1px;font-size:15px;color:#d6d7d9">Specify base point:</div>
<!-- command line -->
<div class="a" style="left:390px;top:956px;width:70px;height:33px;background:#2a303a;border-radius:2px 0 0 2px"></div>
<div class="a" style="left:459px;top:957px;width:1072px;height:31.5px;background:#ffffff;border-radius:3px"></div>
<svg class="a" style="left:0;top:0" width="1918" height="1028" viewBox="0 0 1918 1028">
<g fill="#e8e8e8"><rect x="394" y="962" width="2" height="2"/><rect x="398" y="962" width="2" height="2"/><rect x="394" y="966" width="2" height="2"/><rect x="398" y="966" width="2" height="2"/><rect x="394" y="970" width="2" height="2"/><rect x="398" y="970" width="2" height="2"/><rect x="394" y="974" width="2" height="2"/><rect x="398" y="974" width="2" height="2"/><rect x="394" y="978" width="2" height="2"/><rect x="398" y="978" width="2" height="2"/><rect x="394" y="982" width="2" height="2"/><rect x="398" y="982" width="2" height="2"/></g>
<path d="M408 966.5l10.5 10.5M418.5 966.5l-10.5 10.5" stroke="#e6e6e6" stroke-width="2.2"/>
<path d="M435.5 979.5l9.5-9.5" stroke="#e6e6e6" stroke-width="2.8" stroke-linecap="round"/>
<path d="M443.5 971.5a5 5 0 0 1 4-8.5l-2.5 3 1.5 2.5 3-0.5 2-2.5a5 5 0 0 1 -8 6z" fill="#e6e6e6"/>
<rect x="464.5" y="963.5" width="19" height="19.5" fill="none" stroke="#b9dbe8" stroke-width="1"/>
<rect x="464.5" y="972.5" width="10" height="10.5" fill="none" stroke="#e8d4d0" stroke-width="1"/>
<path d="M487 971.5h9l-4.5 4.5z" fill="#5a5d60"/>
<path d="M1515 976.5h10l-5-5z" fill="#3c3f43"/>
</svg>
<div class="a" style="left:779px;top:962px;width:40px;height:23px;background:#dadcdf;border-radius:3px"></div>
<div class="a" style="left:824px;top:962px;width:83px;height:23px;background:#dadcdf;border-radius:3px"></div>
<div class="t mono" style="left:503px;top:967px;font-size:15px;color:#111"><b>SCALE</b> Specify scale factor or [<span style="color:#1b2bd0">C</span>opy <span style="color:#1b2bd0">R</span>eference]:</div>
<!-- tooltip -->
<div class="a" style="left:764px;top:624px;width:192.5px;height:28.5px;background:#a2a2a2;border:1px solid #1c1c1c"></div>
<div class="t" style="left:770px;top:629.5px;font-size:14.5px;color:#1d1d1d">Specify scale factor or</div>
<svg class="a" style="left:0;top:0" width="1918" height="1028" viewBox="0 0 1918 1028">
<rect x="939.5" y="634.5" width="11" height="11.5" fill="#d2d2d2"/>
<path d="M939 646.5h12.5V633.5" stroke="#f2f2f2" stroke-width="1.2" fill="none"/>
<path d="M945 636.5v6M942.5 640.5l2.5 3 2.5-3" stroke="#8a8a8a" stroke-width="1.2" fill="none"/>
<path d="M941.5 644h7" stroke="#9a9a9a" stroke-width="0.8"/>
</svg>
<div class="a" style="left:960px;top:624px;width:64px;height:26px;background:#ffffff;border:1px solid #1c1c1c"></div>
<div class="a" style="left:966px;top:627px;width:43px;height:19px;background:#0a6ad6"></div>
<div class="t" style="left:967px;top:629px;font-size:14.5px;color:#ffffff">1.6211</div>

<!-- options menu -->
<div class="a" style="left:764.5px;top:656px;width:112px;height:51.5px;background:#ffffff"></div>
<div class="a" style="left:762.5px;top:656px;width:114.5px;height:29px;border:4px solid #e0202a"></div>
<div class="a" style="left:771px;top:665px;width:8px;height:8px;border-radius:50%;background:#000"></div>
<div class="t" style="left:793px;top:662px;font-size:14.5px;color:#7d7d7d">Copy</div>
<div class="t" style="left:793px;top:688px;font-size:14.5px;color:#7d7d7d">Reference</div>

</body></html>
